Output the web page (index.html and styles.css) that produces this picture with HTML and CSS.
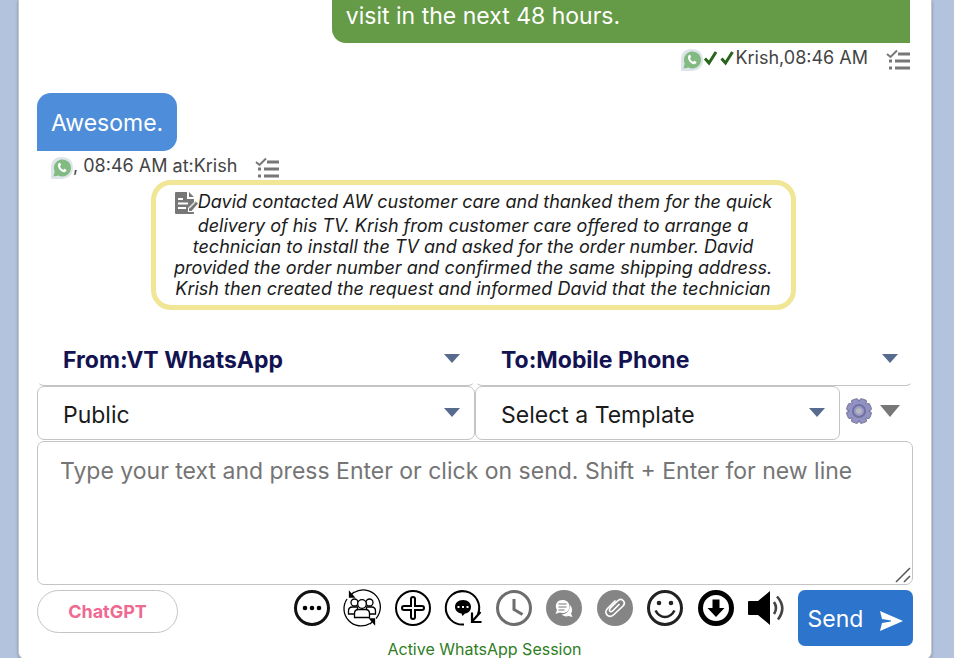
FILE: index.html
```html
<!DOCTYPE html>
<html lang="en">

<head>
    <meta charset="UTF-8">
    <meta name="viewport" content="width=device-width, initial-scale=1.0">
    <title>Chat</title>
    <link rel="stylesheet" href="styles.css">
</head>

<body>
    <!-- shared shapes -->
    <svg class="defs" aria-hidden="true">
        <symbol id="whatsapp" viewBox="0 0 22 22">
            <path d="M0 22V9Q1 0 11 0t11 10-11 12z" fill="#dde4ea" />
            <path d="M2.500 19.500l1.200-5A8.500 8.500 0 1 1 7.500 18.500z" fill="#82bb82" />
            <path d="M7.500 6.500c1-1.500 2-1 2.500 1.500l-1 1.500c.7 1.600 1.700 2.500 3.200 3.300l1.300-1.100c2.300.9 2.500 1.600 1.300 2.800-3 2.700-9.700-3.700-7.300-8z" fill="#fff" />
        </symbol>
        <symbol id="checks" viewBox="0 0 24 22">
            <path d="M1 5l3.500 3L11 1.500" fill="none" stroke="#777" stroke-width="2" />
            <path d="M12 5h12M9 12h15M9 19h15" fill="none" stroke="#777" stroke-width="3" />
            <path d="M3 12h3M3 19h3" stroke="#777" stroke-width="3" />
        </symbol>
    </svg>

    <main class="panel">
        <section class="chat">
            <div class="bubble sent">visit in the next 48 hours.</div>
            <div class="meta meta-sent">
                <svg class="wa"><use href="#whatsapp" /></svg>
                <svg class="ticks" viewBox="0 0 32 16">
                    <path d="M2 8.500l4 4.500L13 2M18.500 8.500l4 4.500L29.500 2" fill="none" stroke="#27651c" stroke-width="3" />
                </svg>
                <span>Krish,08:46 AM</span>
                <svg class="list"><use href="#checks" /></svg>
            </div>

            <div class="bubble received">Awesome.</div>
            <div class="meta meta-received">
                <svg class="wa"><use href="#whatsapp" /></svg>
                <span>, 08:46 AM at:Krish</span>
                <svg class="list"><use href="#checks" /></svg>
            </div>

            <p class="summary"><svg viewBox="0 0 24 24">
                    <path d="M2 1h11v7h7v3l-6 6v4h6v1q0 1-1 1H2q-1 0-1-1V2q0-1 1-1z" fill="#777" />
                    <path d="M15 1l5 5h-5zM15 20v-3l6.500-6.500 2.500 2L17.500 20z" fill="#777" />
                    <path d="M4 8h5M4 12.500h10M4 17h8" stroke="#fff" stroke-width="1.800" />
                    <path d="M15 17.500l6-6" stroke="#fff" stroke-width="1" />
                </svg>David contacted AW customer care and thanked them for the quick delivery of his TV. Krish from customer care offered to arrange a technician to install the TV and asked for the order number. David provided the order number and confirmed the same shipping address. Krish then created the request and informed David that the technician</p>
        </section>

        <form class="composer">
            <div class="row">
                <div class="field channel">
                    <select aria-label="From">
                        <option>From:VT WhatsApp</option>
                    </select>
                </div>
                <div class="field channel">
                    <select aria-label="To">
                        <option>To:Mobile Phone</option>
                    </select>
                </div>
            </div>
            <div class="row">
                <div class="field">
                    <select aria-label="Visibility">
                        <option>Public</option>
                    </select>
                </div>
                <div class="template">
                    <div class="field">
                        <select aria-label="Template">
                            <option>Select a Template</option>
                        </select>
                    </div>
                    <button type="button" class="settings" aria-label="Settings">
                        <svg class="gear" viewBox="0 0 26 26">
                            <g fill="#9292c4" stroke="#77789b" stroke-width="1">
                                <rect x="9.500" y=".5" width="7" height="25" rx="2" transform="rotate(22.5 13 13)" />
                                <rect x="9.500" y=".5" width="7" height="25" rx="2" transform="rotate(67.5 13 13)" />
                                <rect x="9.500" y=".5" width="7" height="25" rx="2" transform="rotate(112.5 13 13)" />
                                <rect x="9.500" y=".5" width="7" height="25" rx="2" transform="rotate(157.5 13 13)" />
                            </g>
                            <circle cx="13" cy="13" r="9.500" fill="#9292c4" />
                            <circle cx="13" cy="13" r="6" fill="#9c9ccb" stroke="#70719f" stroke-width="2" />
                            <circle cx="13" cy="13" r="2.800" fill="#b9b9bd" />
                        </svg>
                        <svg class="caret" viewBox="0 0 20 12">
                            <path d="M0 0h20L10 12z" fill="#777" />
                        </svg>
                    </button>
                </div>
            </div>

            <div class="message">
                <textarea aria-label="Message" placeholder="Type your text and press Enter or click on send. Shift + Enter for new line"></textarea>
                <svg class="grip" viewBox="0 0 16 16">
                    <path d="M1 15L15 1M9 15l6-6" stroke="#555" stroke-width="1.500" />
                </svg>
            </div>

            <div class="footer">
                <button type="button" class="chatgpt">ChatGPT</button>
                <div class="middle">
                    <div class="tools">
                        <button type="button" aria-label="More">
                            <svg viewBox="0 0 36 36">
                                <circle cx="18" cy="18" r="16.500" fill="none" stroke="#111" stroke-width="3" />
                                <circle cx="11" cy="18" r="2.300" />
                                <circle cx="18" cy="18" r="2.300" />
                                <circle cx="25" cy="18" r="2.300" />
                            </svg>
                        </button>
                        <button type="button" aria-label="Transfer to group">
                            <svg viewBox="0 0 36 36" fill="#fff" stroke="#000" stroke-width="1.300">
                                <path d="M10 2.500A17.200 17.200 0 0 1 32 28.500M26 33.500A17.200 17.200 0 0 1 3 9" fill="none" />
                                <path d="M5.500 2v5h4.500zM30.500 34v-5H26z" fill="#000" />
                                <path d="M6 6l4-4M30 30l-4 4" />
                                <circle cx="10.500" cy="12.500" r="3.500" />
                                <circle cx="25.500" cy="12.500" r="3.500" />
                                <path d="M4.500 24v-3q0-4 4-4h5v7zM31.500 24v-3q0-4-4-4h-5v7z" />
                                <circle cx="18" cy="14" r="4.300" />
                                <path d="M10.500 27.500v-4q0-4 4-4h7q4 0 4 4v4z" />
                            </svg>
                        </button>
                        <button type="button" aria-label="Add">
                            <svg viewBox="0 0 36 36" fill="none" stroke="#000" stroke-width="2">
                                <circle cx="18" cy="18" r="17" />
                                <path d="M16 9q0-2 2-2t2 2v7h7q2 0 2 2t-2 2h-7v7q0 2-2 2t-2-2v-7H9q-2 0-2-2t2-2h7z" />
                            </svg>
                        </button>
                        <button type="button" aria-label="Change conversation">
                            <svg viewBox="0 0 36 36" fill="none" stroke="#000" stroke-width="2">
                                <path d="M19 34.500A16.700 16.700 0 1 1 33 24" />
                                <path d="M35.500 22L27.500 31M27 22.500V32h9.500" stroke-width="2.200" />
                                <path d="M18 10c5 0 8 3 8 7 0 3-2 6-6 6.500L17.500 26l-1-2.500C12.500 23 10 20 10 17c0-4 3-7 8-7z" fill="#000" stroke="none" />
                                <path d="M12.500 17h2M17 17h2M21.500 17h2" stroke="#fff" />
                            </svg>
                        </button>
                        <button type="button" aria-label="Schedule">
                            <svg viewBox="0 0 36 36" fill="none" stroke="#6d6d6d" stroke-width="3">
                                <circle cx="18" cy="18" r="16.500" />
                                <path d="M18 9v10.500l8.500 5" />
                            </svg>
                        </button>
                        <button type="button" aria-label="Quick replies">
                            <svg viewBox="0 0 36 36" fill="#fff">
                                <circle cx="18" cy="18" r="18" fill="#858585" />
                                <path d="M24 15c2 2 3 6 1 8.500l1.500 3.500-4-1c-3 1-5 0-7-1.500 5 0 8.500-4 8.500-9.500z" />
                                <path d="M16.500 10c4 0 7 2.500 7 6.500s-3 6.500-7 6.500l-3-.5-4 1.500 1.500-4c-3-5 0-10 5.500-10z" />
                                <path d="M12.500 14h8M12.500 17h8M12.500 20h6" stroke="#777" stroke-width="1.100" />
                            </svg>
                        </button>
                        <button type="button" aria-label="Attach">
                            <svg viewBox="0 0 36 36" fill="none" stroke="#fff" stroke-width="1.700" stroke-linecap="round">
                                <circle cx="18" cy="18" r="18" fill="#858585" stroke="none" />
                                <path d="M22 14.500l-6.500 6.500c-2 2-4-.5-2.500-2.500l7.500-7.500c4-4 9 1 5.500 5l-9 8.500c-5 5-11-1.500-6.500-6l7.500-7.500" />
                            </svg>
                        </button>
                        <button type="button" aria-label="Emoji">
                            <svg viewBox="0 0 36 36">
                                <circle cx="18" cy="18" r="16.500" fill="none" stroke="#222" stroke-width="3" />
                                <circle cx="12" cy="13" r="2.300" fill="#222" />
                                <circle cx="24" cy="13" r="2.300" fill="#222" />
                                <path d="M8.500 20.500q3.500 6.500 9.500 6.500t9.500-6.500" fill="none" stroke="#222" stroke-width="2.600" />
                            </svg>
                        </button>
                        <button type="button" aria-label="Download">
                            <svg viewBox="0 0 36 36">
                                <circle cx="18" cy="18" r="15.500" fill="none" stroke="#000" stroke-width="5" />
                                <path d="M14.500 9.500h7V18h5L18 27l-8.500-9h5z" />
                            </svg>
                        </button>
                        <button type="button" aria-label="Sound">
                            <svg viewBox="0 0 36 36">
                                <path d="M0 12q0-1 1-1h9L22 1v34L10 25H1q-1 0-1-1z" />
                                <path d="M26 12q4 6 0 12M29 6.500q10 11 1 23" fill="none" stroke="#444" stroke-width="2.600" />
                            </svg>
                        </button>
                    </div>
                    <div class="status">Active WhatsApp Session</div>
                </div>
                <button type="submit" class="send">Send
                    <svg viewBox="0 0 24 20">
                        <path d="M1 0l23 10L1 20l2-8 9-1.500v-1L3 8z" fill="#fff" />
                    </svg>
                </button>
            </div>
        </form>
    </main>
</body>

</html>
```

FILE: styles.css
```css
* {
    box-sizing: border-box;
}

body {
    margin: 0;
    padding: 0 22px 0 18px;
    background: #b3c3dd;
    font-family: Inter, "Liberation Sans", sans-serif;
    color: #1b1b1b;
}

button,
select,
textarea {
    font-family: inherit;
}

button {
    padding: 0;
    border: 0;
    background: none;
    cursor: pointer;
}

svg {
    flex: none;
    overflow: visible;
}

.defs {
    position: absolute;
    width: 0;
    height: 0;
}

.panel {
    padding: 0 18px;
    background: #fff;
    border: 1px solid #c4c8ce;
    border-top: 0;
    border-radius: 0 0 8px 8px;
    box-shadow: 0 1px 3px rgba(0, 0, 0, 0.3);
}

/* messages */
.chat {
    display: flex;
    flex-direction: column;
    align-items: flex-start;
}

.bubble {
    color: #fff;
    font-size: 23px;
    line-height: 28px;
}

.sent {
    align-self: flex-end;
    width: 66%;
    margin-right: 3px;
    padding: 2px 14px 13px;
    background: #659a46;
    border-radius: 0 0 0 14px;
}

.received {
    margin-top: 22px;
    padding: 16px 14px 14px;
    background: #4d8dd9;
    border-radius: 14px 14px 14px 0;
}

.meta {
    display: flex;
    align-items: center;
    height: 28px;
    padding-top: 2px;
    color: #444;
    font-size: 18px;
    line-height: 22px;
}

.meta-sent {
    align-self: flex-end;
    margin-right: 3px;
}

.meta-received {
    padding-left: 14px;
}

.wa {
    width: 22px;
    height: 22px;
    margin-top: 4px;
}

.ticks {
    width: 32px;
    height: 16px;
}

.list {
    width: 24px;
    height: 22px;
    margin: 4px 0 0 18px;
}

.summary {
    align-self: center;
    width: 645px;
    max-width: 100%;
    margin: 1px 4px 0 0;
    padding: 6px 12px;
    border: 5px solid #f0e695;
    border-radius: 20px;
    font-size: 18px;
    font-style: italic;
    line-height: 21px;
    text-align: center;
}

.summary svg {
    width: 24px;
    height: 24px;
    vertical-align: -7px;
}

/* composer */
.composer {
    margin-top: 22px;
}

.row {
    display: grid;
    grid-template-columns: 1fr 1fr;
}

.field {
    position: relative;
    flex: 1;
}

.field::after {
    content: "";
    position: absolute;
    top: 22px;
    right: 15px;
    border: solid transparent;
    border-width: 9px 8px 0;
    border-top-color: #566b8d;
    pointer-events: none;
}

.field select {
    display: block;
    width: 100%;
    height: 54px;
    padding: 3px 25px 0;
    border: 1px solid #c4c4c4;
    border-radius: 7px;
    background: #fff;
    color: #1b1b1b;
    font-size: 23px;
    appearance: none;
}

.channel select {
    padding-top: 1px;
    border-color: transparent;
    border-bottom-color: #c4c4c4;
    color: #131352;
    font-weight: 700;
}

.template {
    display: flex;
    align-items: center;
}

.settings {
    display: flex;
    align-items: center;
    gap: 8px;
    padding: 0 13px 4px 6px;
}

.gear {
    width: 26px;
    height: 26px;
}

.caret {
    width: 20px;
    height: 12px;
}

.message {
    position: relative;
    margin-top: 1px;
}

.message textarea {
    display: block;
    width: 100%;
    height: 144px;
    padding: 14px 22px;
    border: 1px solid #c4c4c4;
    border-radius: 7px;
    font-size: 23px;
    line-height: 30px;
    resize: none;
}

.message textarea::placeholder {
    color: #757575;
}

.grip {
    position: absolute;
    right: 2px;
    bottom: 2px;
    width: 16px;
    height: 16px;
}

/* bottom bar */
.footer {
    display: flex;
    align-items: flex-start;
    padding: 5px 0 0;
}

.chatgpt {
    width: 141px;
    height: 43px;
    border: 1px solid #c4c4c4;
    border-radius: 22px;
    color: #ef6a92;
    font-size: 18px;
    font-weight: 700;
}

.middle {
    display: flex;
    flex: 1;
    flex-direction: column;
    padding-right: 7px;
}

.tools {
    display: flex;
    justify-content: space-between;
    align-self: flex-end;
    width: 490px;
    margin-right: 7px;
}

.tools svg {
    display: block;
    width: 36px;
    height: 36px;
}

.status {
    padding: 13px 0 0;
    color: #2e7d1e;
    font-size: 16px;
    line-height: 20px;
    text-align: center;
}

.send {
    display: flex;
    align-items: center;
    justify-content: center;
    gap: 16px;
    width: 115px;
    height: 56px;
    padding-top: 2px;
    border-radius: 7px;
    background: #2d75cc;
    color: #fff;
    font-size: 23px;
}

.send svg {
    width: 24px;
    height: 20px;
    margin-top: 4px;
}
```
